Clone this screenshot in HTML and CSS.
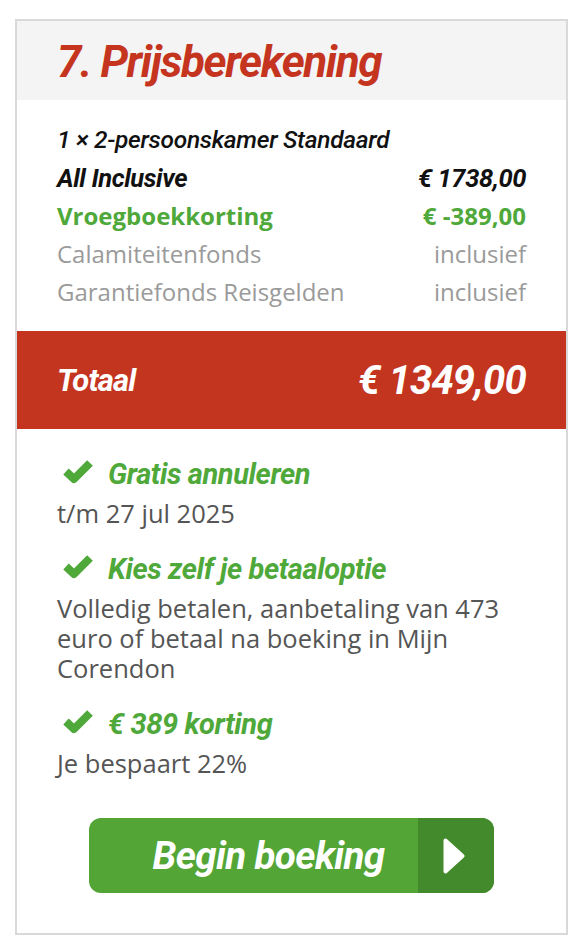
FILE: index.html
```html
<!DOCTYPE html>
<html lang="nl">
<head>
<meta charset="utf-8">
<title>Prijsberekening</title>
<link rel="stylesheet" href="styles.css">
</head>
<body>
<section class="card">
  <header class="head">
    <h2 class="title">7. Prijsberekening</h2>
  </header>
  <div class="rows">
    <div class="row row-room"><span>1 × 2-persoonskamer Standaard</span></div>
    <div class="row row-board"><span>All Inclusive</span><span>€ 1738,00</span></div>
    <div class="row row-discount"><span>Vroegboekkorting</span><span>€ -389,00</span></div>
    <div class="row row-muted"><span>Calamiteitenfonds</span><span>inclusief</span></div>
    <div class="row row-muted"><span>Garantiefonds Reisgelden</span><span>inclusief</span></div>
  </div>
  <div class="total">
    <span class="total-label">Totaal</span>
    <span class="total-value">€ 1349,00</span>
  </div>
  <div class="features">
    <div class="feature">
      <div class="feature-title">
        <svg class="check" viewBox="0 0 32 26" width="32" height="26"><path d="M4 13.5 L12 21 L28 5" /></svg>
        <span>Gratis annuleren</span>
      </div>
      <p class="feature-desc">t/m 27 jul 2025</p>
    </div>
    <div class="feature">
      <div class="feature-title">
        <svg class="check" viewBox="0 0 32 26" width="32" height="26"><path d="M4 13.5 L12 21 L28 5" /></svg>
        <span>Kies zelf je betaaloptie</span>
      </div>
      <p class="feature-desc">Volledig betalen, aanbetaling van 473 euro of betaal na boeking in Mijn Corendon</p>
    </div>
    <div class="feature">
      <div class="feature-title">
        <svg class="check" viewBox="0 0 32 26" width="32" height="26"><path d="M4 13.5 L12 21 L28 5" /></svg>
        <span>€ 389 korting</span>
      </div>
      <p class="feature-desc">Je bespaart 22%</p>
    </div>
  </div>
  <div class="actions">
    <a class="btn" href="#">
      <span class="btn-label">Begin boeking</span>
      <span class="btn-arrow">
        <svg viewBox="0 0 22 36" width="22" height="36"><path d="M2.5 2.5 L19.5 18 L2.5 33.5 Z" /></svg>
      </span>
    </a>
  </div>
</section>
</body>
</html>
```
FILE: styles.css
```css
* { box-sizing: border-box; }

body {
  margin: 0;
  background: #ffffff;
  font-family: "Open Sans", "Liberation Sans", sans-serif;
}

.card {
  margin: 19px 0 0 15px;
  width: 553px;
  height: 916px;
  border: 2px solid #d9d9d9;
  background: #ffffff;
}

.head {
  height: 79px;
  background: #f4f4f4;
  padding: 0 40px;
  display: flex;
  align-items: center;
}

.title {
  margin: 0;
  padding-top: 3px;
  font-family: Roboto, "Liberation Sans", sans-serif;
  font-weight: 700;
  font-style: italic;
  font-size: 44px;
  letter-spacing: -1.4px;
  color: #c4341f;
  line-height: 1;
}

.rows {
  padding: 21px 40px 0;
  height: 231px;
}

.row {
  display: flex;
  justify-content: space-between;
  height: 38px;
  line-height: 38px;
  font-size: 24px;
  white-space: nowrap;
}

.row-room {
  font-family: Roboto, "Liberation Sans", sans-serif;
  font-style: italic;
  font-weight: 500;
  font-size: 24.5px;
  color: #111111;
  letter-spacing: -0.3px;
}

.row-board {
  font-family: Roboto, "Liberation Sans", sans-serif;
  font-style: italic;
  font-weight: 700;
  font-size: 25.5px;
  color: #111111;
  letter-spacing: -0.4px;
}

.row-discount {
  font-weight: 700;
  color: #4fa83a;
}

.row-muted {
  color: #9a9a9a;
}

.total {
  height: 98px;
  background: #c4351f;
  color: #ffffff;
  display: flex;
  align-items: center;
  justify-content: space-between;
  padding: 0 40px;
  font-family: Roboto, "Liberation Sans", sans-serif;
  font-style: italic;
  font-weight: 700;
}

.total-label {
  font-size: 31px;
  letter-spacing: -0.8px;
}

.total-value {
  font-size: 40px;
  letter-spacing: -0.8px;
}

.features {
  padding: 30px 40px 0;
}

.feature + .feature {
  margin-top: 26px;
}

.feature-title {
  display: flex;
  align-items: flex-start;
  gap: 14px;
  padding-left: 5px;
  height: 30px;
  line-height: 30px;
  margin-bottom: 9px;
  font-family: Roboto, "Liberation Sans", sans-serif;
  font-style: italic;
  font-weight: 700;
  font-size: 29px;
  letter-spacing: -0.4px;
  color: #4fa83a;
}

.check {
  flex: none;
  margin-top: -1px;
}

.check path {
  fill: none;
  stroke: #4fa83a;
  stroke-width: 8;
  stroke-linejoin: round;
}

.feature-desc {
  margin: 0;
  font-size: 25.5px;
  line-height: 30px;
  color: #555555;
}

.actions {
  margin-top: 40px;
  display: flex;
  justify-content: center;
}

.btn {
  display: flex;
  width: 405px;
  height: 75px;
  border-radius: 12px;
  overflow: hidden;
  background: #53a535;
  text-decoration: none;
  color: #ffffff;
}

.btn-label {
  flex: 1;
  display: flex;
  align-items: center;
  justify-content: center;
  padding-left: 30px;
  font-family: Roboto, "Liberation Sans", sans-serif;
  font-style: italic;
  font-weight: 700;
  font-size: 38.5px;
  letter-spacing: -0.6px;
}

.btn-arrow {
  flex: none;
  width: 76px;
  background: #438a2c;
  display: flex;
  align-items: center;
  justify-content: center;
  padding-right: 4px;
}

.btn-arrow path {
  fill: #ffffff;
  stroke: #ffffff;
  stroke-width: 4;
  stroke-linejoin: round;
}
```
